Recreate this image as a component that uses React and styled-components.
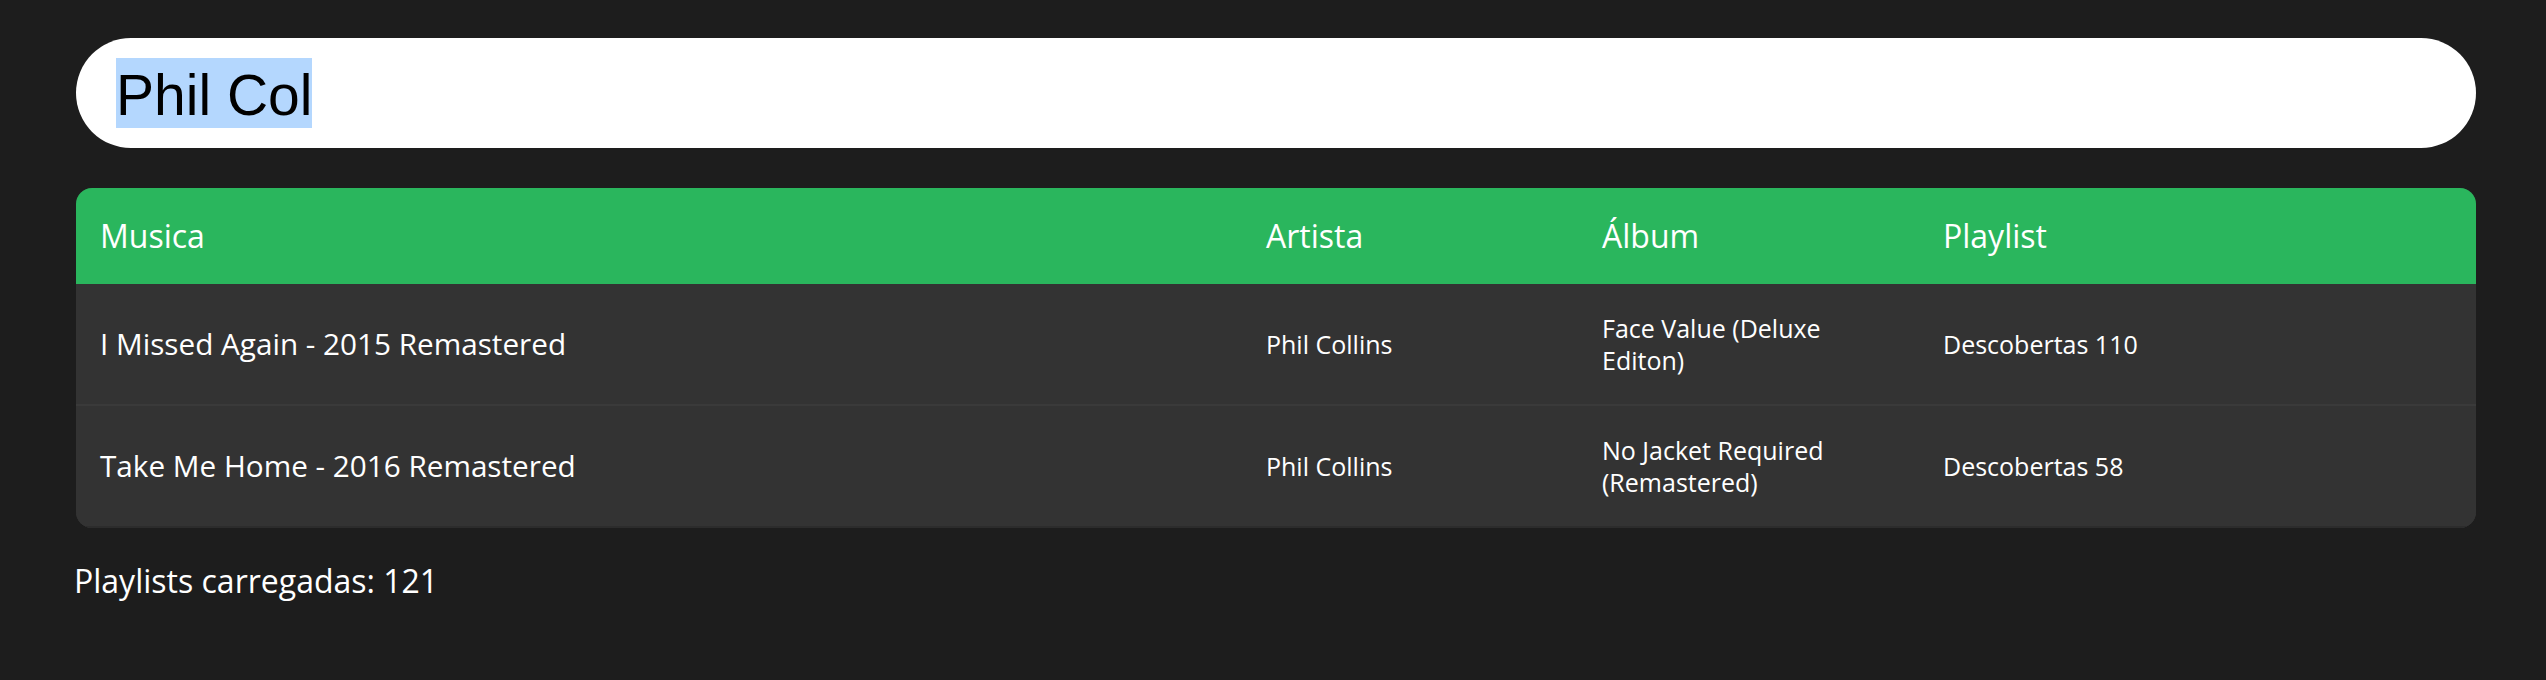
import React from "react";
import styled, { createGlobalStyle } from "styled-components";

const GlobalStyle = createGlobalStyle`
  html, body {
    margin: 0;
    padding: 0;
    background: #1d1d1d;
  }
  body {
    font-family: "Open Sans", "Noto Sans", sans-serif;
    color: #fff;
  }
`;

const Page = styled.div`
  min-height: 680px;
  box-sizing: border-box;
  padding: 38px 70px 0 76px;
`;

const SearchField = styled.div`
  height: 110px;
  box-sizing: border-box;
  background: #fff;
  border-radius: 55px;
  padding: 0 40px;
  display: flex;
  align-items: center;
  font-family: "Liberation Sans", Arial, sans-serif;
  font-size: 57px;
  color: #000;
`;

const Query = styled.span`
  display: inline-block;
  height: 70px;
  line-height: 74px;
  background: ${props => (props.selected ? "#b4d7fe" : "transparent")};
`;

const Table = styled.div`
  margin-top: 40px;
  border-radius: 16px;
  overflow: hidden;
  background: #333333;
`;

const Row = styled.div`
  display: grid;
  grid-template-columns: 1166px 336px 341px 1fr;
  height: ${props => (props.head ? "96px" : "120px")};
  background: ${props => (props.head ? "#2ab65d" : "#333333")};
  border-bottom: ${props => (props.head ? "none" : "2px solid #3a3a3a")};

  &:last-child {
    border-bottom-color: #2c2c2c;
  }
`;

const Cell = styled.div`
  display: flex;
  align-items: center;
  padding: 0 24px;
  font-size: ${props => props.size || 25}px;
  font-weight: 500;
  line-height: 1.3;
`;

const Footer = styled.p`
  margin: 31px 0 0 -2px;
  font-size: 32px;
  font-weight: 500;
`;

const columns = ["Musica", "Artista", "Álbum", "Playlist"];

const tracks = [
  {
    title: "I Missed Again - 2015 Remastered",
    artist: "Phil Collins",
    album: "Face Value (Deluxe Editon)",
    playlist: "Descobertas 110"
  },
  {
    title: "Take Me Home - 2016 Remastered",
    artist: "Phil Collins",
    album: "No Jacket Required (Remastered)",
    playlist: "Descobertas 58"
  }
];

const App = () => (
  <Page>
    <GlobalStyle />
    <SearchField>
      <Query selected>Phil Col</Query>
    </SearchField>
    <Table>
      <Row head>
        {columns.map(name => (
          <Cell key={name} size={32}>
            {name}
          </Cell>
        ))}
      </Row>
      {tracks.map(track => (
        <Row key={track.title}>
          <Cell size={29.7}>{track.title}</Cell>
          <Cell>{track.artist}</Cell>
          <Cell>{track.album}</Cell>
          <Cell>{track.playlist}</Cell>
        </Row>
      ))}
    </Table>
    <Footer>Playlists carregadas: 121</Footer>
  </Page>
);

export default App;
